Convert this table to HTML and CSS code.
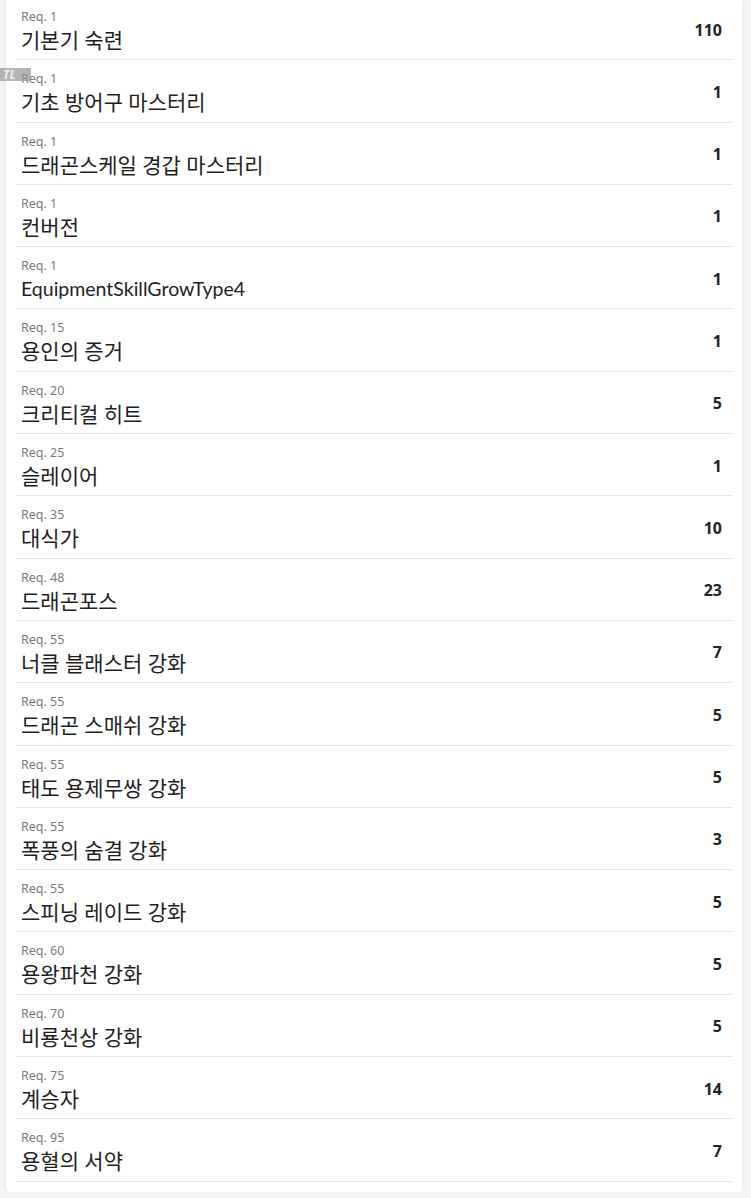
FILE: index.html
```html
<!DOCTYPE html>
<html lang="ko">
<head>
    <meta charset="UTF-8">
    <meta name="viewport" content="width=device-width, initial-scale=1.0">
    <title>Skills</title>
    <link rel="stylesheet" href="styles.css">
</head>
<body>
    <div class="tag">TL</div>
    <div class="skill-list">
        <div class="skill"><div class="info"><div class="req">Req. 1</div><div class="name">기본기 숙련</div></div><div class="level">110</div></div>
        <div class="skill"><div class="info"><div class="req">Req. 1</div><div class="name">기초 방어구 마스터리</div></div><div class="level">1</div></div>
        <div class="skill"><div class="info"><div class="req">Req. 1</div><div class="name">드래곤스케일 경갑 마스터리</div></div><div class="level">1</div></div>
        <div class="skill"><div class="info"><div class="req">Req. 1</div><div class="name">컨버전</div></div><div class="level">1</div></div>
        <div class="skill"><div class="info"><div class="req">Req. 1</div><div class="name en">EquipmentSkillGrowType4</div></div><div class="level">1</div></div>
        <div class="skill"><div class="info"><div class="req">Req. 15</div><div class="name">용인의 증거</div></div><div class="level">1</div></div>
        <div class="skill"><div class="info"><div class="req">Req. 20</div><div class="name">크리티컬 히트</div></div><div class="level">5</div></div>
        <div class="skill"><div class="info"><div class="req">Req. 25</div><div class="name">슬레이어</div></div><div class="level">1</div></div>
        <div class="skill"><div class="info"><div class="req">Req. 35</div><div class="name">대식가</div></div><div class="level">10</div></div>
        <div class="skill"><div class="info"><div class="req">Req. 48</div><div class="name">드래곤포스</div></div><div class="level">23</div></div>
        <div class="skill"><div class="info"><div class="req">Req. 55</div><div class="name">너클 블래스터 강화</div></div><div class="level">7</div></div>
        <div class="skill"><div class="info"><div class="req">Req. 55</div><div class="name">드래곤 스매쉬 강화</div></div><div class="level">5</div></div>
        <div class="skill"><div class="info"><div class="req">Req. 55</div><div class="name">태도 용제무쌍 강화</div></div><div class="level">5</div></div>
        <div class="skill"><div class="info"><div class="req">Req. 55</div><div class="name">폭풍의 숨결 강화</div></div><div class="level">3</div></div>
        <div class="skill"><div class="info"><div class="req">Req. 55</div><div class="name">스피닝 레이드 강화</div></div><div class="level">5</div></div>
        <div class="skill"><div class="info"><div class="req">Req. 60</div><div class="name">용왕파천 강화</div></div><div class="level">5</div></div>
        <div class="skill"><div class="info"><div class="req">Req. 70</div><div class="name">비룡천상 강화</div></div><div class="level">5</div></div>
        <div class="skill"><div class="info"><div class="req">Req. 75</div><div class="name">계승자</div></div><div class="level">14</div></div>
        <div class="skill"><div class="info"><div class="req">Req. 95</div><div class="name">용혈의 서약</div></div><div class="level">7</div></div>
    </div>
</body>
</html>
```

FILE: styles.css
```css
body {
    margin: 0;
    background: #f4f5f7;
    font-family: "Noto Sans", "Noto Sans CJK KR", sans-serif;
    color: #1e1e1e;
}
.skill-list {
    background: white;
    margin: -2px 9px 0 6px;
    padding: 0 10px 10px 10px;
    border-radius: 0 0 4px 4px;
    box-shadow: 0 1px 6px rgba(0, 0, 0, 0.08);
}
.skill {
    display: flex;
    align-items: center;
    justify-content: space-between;
    padding: 10px 10px 5.3px 5px;
    border-bottom: 1px solid #e6e6e6;
}
.req {
    font-size: 12.5px;
    line-height: 18px;
    color: #7a7a7a;
}
.name {
    font-family: Lato, "Noto Sans CJK KR", sans-serif;
    font-size: 21px;
    line-height: 28px;
    color: #1e1e1e;
}
.name.en {
    font-size: 19.5px;
}
.level {
    font-size: 16px;
    font-weight: bold;
    color: #222;
    margin-bottom: 3px;
}
/* klein label linksboven */
.tag {
    position: absolute;
    left: 0;
    top: 68px;
    width: 31px;
    height: 13px;
    background: rgba(150, 150, 150, 0.7);
    color: #eee;
    font-size: 12px;
    font-weight: bold;
    font-style: italic;
    line-height: 13px;
    padding-left: 3px;
    box-sizing: border-box;
}
```
